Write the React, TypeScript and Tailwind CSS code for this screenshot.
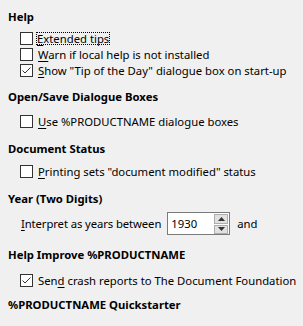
import React from 'react';

function Box({ checked }: { checked?: boolean }) {
  return (
    <span className="w-[13px] h-[13px] shrink-0 border border-[#333333] bg-white flex items-center justify-center">
      {checked && (
        <svg width="11" height="11" viewBox="0 0 11 11">
          <path d="M1.5 5.5 L4 8 L9.5 2.5" fill="none" stroke="#333333" strokeWidth="1" />
        </svg>
      )}
    </span>
  );
}

function Check({ label, u, checked, focus }: { label: string; u: number; checked?: boolean; focus?: boolean }) {
  return (
    <div className="flex items-center h-4 pl-5 whitespace-nowrap">
      <Box checked={checked} />
      <span className={'ml-[3px] px-px leading-[13px] ' + (focus ? 'outline-1 outline-dotted outline-black -outline-offset-1 h-[13px]' : 'border border-transparent')}>
        {label.slice(0, u)}
        <span className="underline underline-offset-2">{label[u]}</span>
        {label.slice(u + 1)}
      </span>
    </div>
  );
}

function Heading({ children, className }: { children: React.ReactNode; className?: string }) {
  return <div className={'pl-2 h-4 leading-4 font-bold whitespace-nowrap ' + (className || '')}>{children}</div>;
}

export default function App() {
  return (
    <div className="w-[303px] h-[326px] bg-[#f0f0f0] text-[11.3px] leading-4 text-black overflow-hidden" style={{ fontFamily: '"Noto Sans", sans-serif' }}>
      <div className="pt-[9px] flex flex-col">
        <Heading>Help</Heading>
        <div className="mt-[5px]">
          <Check label="Extended tips" u={0} focus />
          <Check label="Warn if local help is not installed" u={0} />
          <Check label={'Show "Tip of the Day" dialogue box on start-up'} u={0} checked />
        </div>

        <Heading className="mt-[11px]">Open/Save Dialogue Boxes</Heading>
        <div className="mt-[8px]">
          <Check label="Use %PRODUCTNAME dialogue boxes" u={0} />
        </div>

        <Heading className="mt-[12px]">Document Status</Heading>
        <div className="mt-[6px]">
          <Check label={'Printing sets "document modified" status'} u={0} />
        </div>

        <Heading className="mt-[12px]">Year (Two Digits)</Heading>
        <div className="mt-[5px] flex items-center pl-[21px] h-[23px] whitespace-nowrap">
          <span className="tracking-[-0.1px]">
            <span className="underline underline-offset-2">I</span>nterpret as years between
          </span>
          <div className="ml-[6px] w-[63px] h-[23px] border border-[#7a7a7a] bg-white flex items-center">
            <span className="pl-[3px] flex-1">1930</span>
            <div className="flex flex-col mr-px gap-px">
              <span className="w-[14px] h-[10px] bg-[#e1e1e1] border border-[#adadad] flex items-center justify-center">
                <svg width="7" height="4" viewBox="0 0 7 4"><path d="M0 4 L3.5 0 L7 4 Z" fill="#333" /></svg>
              </span>
              <span className="w-[14px] h-[9px] bg-[#e1e1e1] border border-[#adadad] flex items-center justify-center">
                <svg width="7" height="4" viewBox="0 0 7 4"><path d="M0 0 L3.5 4 L7 0 Z" fill="#333" /></svg>
              </span>
            </div>
          </div>
          <span className="ml-[7px]">and</span>
        </div>

        <Heading className="mt-[12px]">Help Improve %PRODUCTNAME</Heading>
        <div className="mt-[9px]">
          <Check label="Send crash reports to The Document Foundation" u={3} checked />
        </div>

        <Heading className="mt-[9px]">%PRODUCTNAME Quickstarter</Heading>
      </div>
    </div>
  );
}
